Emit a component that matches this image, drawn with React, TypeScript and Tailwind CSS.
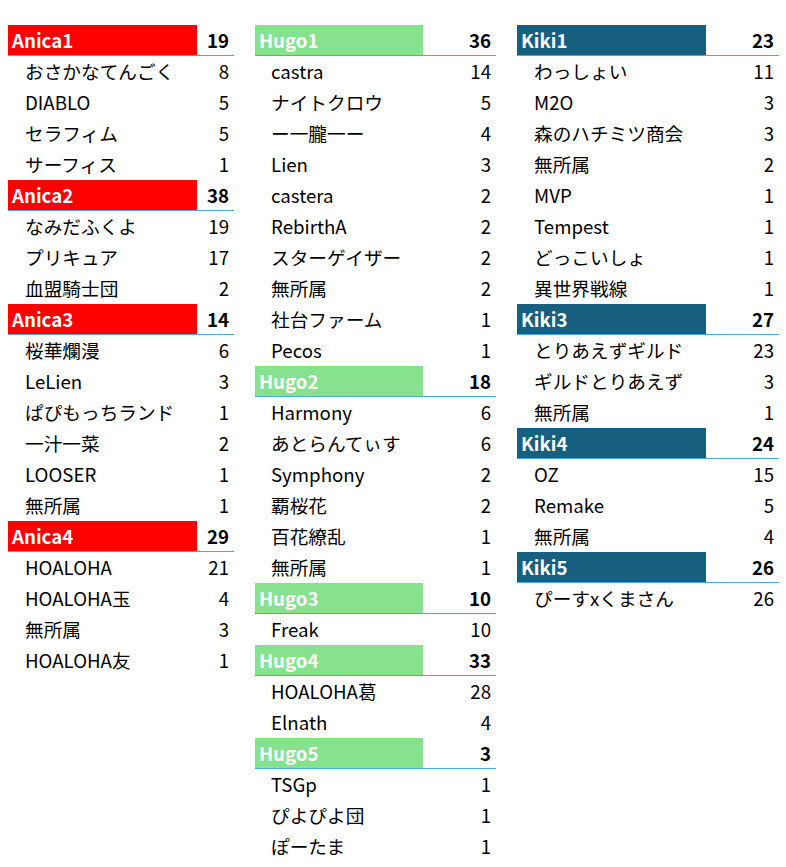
type Group = { name: string; total: number; rows: [string, number][] };

const FONT = "font-['Noto_Sans_CJK_JP','Noto_Sans',sans-serif]";

const anica: Group[] = [
  { name: "Anica1", total: 19, rows: [["おさかなてんごく", 8], ["DIABLO", 5], ["セラフィム", 5], ["サーフィス", 1]] },
  { name: "Anica2", total: 38, rows: [["なみだふくよ", 19], ["プリキュア", 17], ["血盟騎士団", 2]] },
  { name: "Anica3", total: 14, rows: [["桜華爛漫", 6], ["LeLien", 3], ["ぱぴもっちランド", 1], ["一汁一菜", 2], ["LOOSER", 1], ["無所属", 1]] },
  { name: "Anica4", total: 29, rows: [["HOALOHA", 21], ["HOALOHA玉", 4], ["無所属", 3], ["HOALOHA友", 1]] },
];

const hugo: Group[] = [
  { name: "Hugo1", total: 36, rows: [["castra", 14], ["ナイトクロウ", 5], ["ー一朧一ー", 4], ["Lien", 3], ["castera", 2], ["RebirthA", 2], ["スターゲイザー", 2], ["無所属", 2], ["社台ファーム", 1], ["Pecos", 1]] },
  { name: "Hugo2", total: 18, rows: [["Harmony", 6], ["あとらんてぃす", 6], ["Symphony", 2], ["覇桜花", 2], ["百花繚乱", 1], ["無所属", 1]] },
  { name: "Hugo3", total: 10, rows: [["Freak", 10]] },
  { name: "Hugo4", total: 33, rows: [["HOALOHA葛", 28], ["Elnath", 4]] },
  { name: "Hugo5", total: 3, rows: [["TSGp", 1], ["ぴよぴよ団", 1], ["ぽーたま", 1]] },
];

const kiki: Group[] = [
  { name: "Kiki1", total: 23, rows: [["わっしょい", 11], ["M2O", 3], ["森のハチミツ商会", 3], ["無所属", 2], ["MVP", 1], ["Tempest", 1], ["どっこいしょ", 1], ["異世界戦線", 1]] },
  { name: "Kiki3", total: 27, rows: [["とりあえずギルド", 23], ["ギルドとりあえず", 3], ["無所属", 1]] },
  { name: "Kiki4", total: 24, rows: [["OZ", 15], ["Remake", 5], ["無所属", 4]] },
  { name: "Kiki5", total: 26, rows: [["ぴーすxくまさん", 26]] },
];

function Column({ groups, width, nameW, boxClass, itemIndent }: {
  groups: Group[];
  width: string;
  nameW: string;
  boxClass: string;
  itemIndent: string;
}) {
  return (
    <div className={`${width} flex flex-col`}>
      {groups.map((g) => (
        <div key={g.name} className="flex flex-col">
          <div className="flex h-[31px] border-b border-[#4aa9da]">
            <div className={`${nameW} ${boxClass} flex items-center pl-[4px] text-white font-bold`}>{g.name}</div>
            <div className="flex-1 flex items-center justify-end pr-[5px] font-bold text-black">{g.total}</div>
          </div>
          {g.rows.map(([n, v], i) => (
            <div key={i} className="flex h-[31px] items-center pb-[1px] text-black">
              <div className={`flex-1 ${itemIndent}`}>{n}</div>
              <div className="pr-[5px]">{v}</div>
            </div>
          ))}
        </div>
      ))}
    </div>
  );
}

export default function App() {
  return (
    <div className={`w-[786px] h-[867px] bg-white ${FONT} text-[18.67px] leading-none`}>
      <div className="flex items-start pt-[25px] pl-[8px] gap-[21px]">
        <Column groups={anica} width="w-[226px]" nameW="w-[189px]" boxClass="bg-[#ff0000]" itemIndent="pl-[17px]" />
        <Column groups={hugo} width="w-[241px]" nameW="w-[168px]" boxClass="bg-[#86e28f]" itemIndent="pl-[16px]" />
        <Column groups={kiki} width="w-[262px]" nameW="w-[189px]" boxClass="bg-[#165f7f]" itemIndent="pl-[17px]" />
      </div>
    </div>
  );
}
